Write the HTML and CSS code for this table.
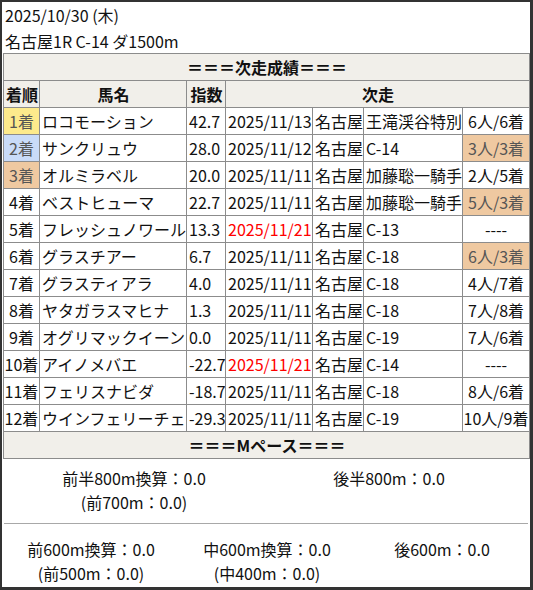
FILE: index.html
```html
<!DOCTYPE html>
<html lang="ja">
<head>
<meta charset="utf-8">
<link rel="stylesheet" href="styles.css">
</head>
<body>
<div class="frame">
  <div class="head">
    <div>2025/10/30 (木)</div>
    <div>名古屋1R C-14 ダ1500m</div>
  </div>
  <table class="res">
    <colgroup>
      <col class="c1"><col class="c2"><col class="c3"><col class="c4"><col class="c5"><col class="c6"><col class="c7">
    </colgroup>
    <tr><th colspan="7" class="sec">＝＝＝次走成績＝＝＝</th></tr>
    <tr><th>着順</th><th>馬名</th><th>指数</th><th colspan="4">次走</th></tr>
    <tr><td class="rk gold">1着</td><td>ロコモーション</td><td>42.7</td><td>2025/11/13</td><td>名古屋</td><td>王滝渓谷特別</td><td class="fin">6人/6着</td></tr>
    <tr><td class="rk silver">2着</td><td>サンクリュウ</td><td>28.0</td><td>2025/11/12</td><td>名古屋</td><td>C-14</td><td class="fin bronze">3人/3着</td></tr>
    <tr><td class="rk bronze">3着</td><td>オルミラベル</td><td>20.0</td><td>2025/11/11</td><td>名古屋</td><td>加藤聡一騎手</td><td class="fin">2人/5着</td></tr>
    <tr><td class="rk">4着</td><td>ベストヒューマ</td><td>22.7</td><td>2025/11/11</td><td>名古屋</td><td>加藤聡一騎手</td><td class="fin bronze">5人/3着</td></tr>
    <tr><td class="rk">5着</td><td>フレッシュノワール</td><td>13.3</td><td class="red">2025/11/21</td><td>名古屋</td><td>C-13</td><td class="fin">----</td></tr>
    <tr><td class="rk">6着</td><td>グラスチアー</td><td>6.7</td><td>2025/11/11</td><td>名古屋</td><td>C-18</td><td class="fin bronze">6人/3着</td></tr>
    <tr><td class="rk">7着</td><td>グラスティアラ</td><td>4.0</td><td>2025/11/11</td><td>名古屋</td><td>C-18</td><td class="fin">4人/7着</td></tr>
    <tr><td class="rk">8着</td><td>ヤタガラスマヒナ</td><td>1.3</td><td>2025/11/11</td><td>名古屋</td><td>C-18</td><td class="fin">7人/8着</td></tr>
    <tr><td class="rk">9着</td><td>オグリマックイーン</td><td>0.0</td><td>2025/11/11</td><td>名古屋</td><td>C-19</td><td class="fin">7人/6着</td></tr>
    <tr><td class="rk">10着</td><td>アイノメバエ</td><td>-22.7</td><td class="red">2025/11/21</td><td>名古屋</td><td>C-14</td><td class="fin">----</td></tr>
    <tr><td class="rk">11着</td><td>フェリスナビダ</td><td>-18.7</td><td>2025/11/11</td><td>名古屋</td><td>C-18</td><td class="fin">8人/6着</td></tr>
    <tr><td class="rk">12着</td><td>ウインフェリーチェ</td><td>-29.3</td><td>2025/11/11</td><td>名古屋</td><td>C-19</td><td class="fin">10人/9着</td></tr>
    <tr><th colspan="7" class="sec">＝＝＝Mペース＝＝＝</th></tr>
  </table>
  <div class="pace">
    <div class="prow two">
      <div class="pcell"><div>前半800m換算：0.0</div><div>(前700m：0.0)</div></div>
      <div class="pcell right"><div>後半800m：0.0</div></div>
    </div>
    <div class="rule"></div>
    <div class="prow three">
      <div class="pcell"><div>前600m換算：0.0</div><div>(前500m：0.0)</div></div>
      <div class="pcell"><div>中600m換算：0.0</div><div>(中400m：0.0)</div></div>
      <div class="pcell"><div>後600m：0.0</div></div>
    </div>
  </div>
</div>
</body>
</html>
```

FILE: styles.css
```css
html, body {
  margin: 0;
  padding: 0;
  background: #fff;
}
body {
  font-family: "Noto Sans CJK JP", "Noto Sans", sans-serif;
  font-size: 16px;
  color: #111;
}
.frame {
  box-sizing: border-box;
  width: 533px;
  height: 590px;
  border: 2px solid #333;
  border-right-width: 3px;
  border-bottom-width: 3px;
  padding: 0 1px;
  overflow: hidden;
}
.head {
  line-height: 26px;
  padding: 0 2px;
  margin-bottom: -1px;
}
.res {
  border-collapse: collapse;
  table-layout: fixed;
  width: 526px;
}
.c1 { width: 36px; }
.c2 { width: 147px; }
.c3 { width: 39px; }
.c4 { width: 87px; }
.c5 { width: 51px; }
.c6 { width: 99px; }
.c7 { width: 67px; }
.res th, .res td {
  border: 1px solid #8c8c8c;
  height: 26px;
  padding: 0 1px 0 2px;
  line-height: 26px;
  white-space: nowrap;
  overflow: hidden;
  text-align: left;
}
.res th {
  background: #f1efea;
  font-weight: bold;
  text-align: center;
}
.res td.rk, .res td.fin {
  text-align: center;
  padding: 0;
}
.gold { background: #fdea8c; color: #555; }
.silver { background: #c9dbf8; color: #555; }
.bronze { background: #efc9a1; color: #555; }
.red { color: #f00; }
.pace {
  padding-top: 7px;
}
.prow {
  display: grid;
  line-height: 24px;
  text-align: center;
}
.two {
  grid-template-columns: 262px 1fr;
  padding-bottom: 9px;
}
.two .right {
  padding-right: 16px;
}
.three {
  grid-template-columns: 176px 176px 1fr;
  padding-top: 13px;
}
.rule {
  height: 1px;
  background: #a8a8a8;
  margin: 0 1px;
}
```
